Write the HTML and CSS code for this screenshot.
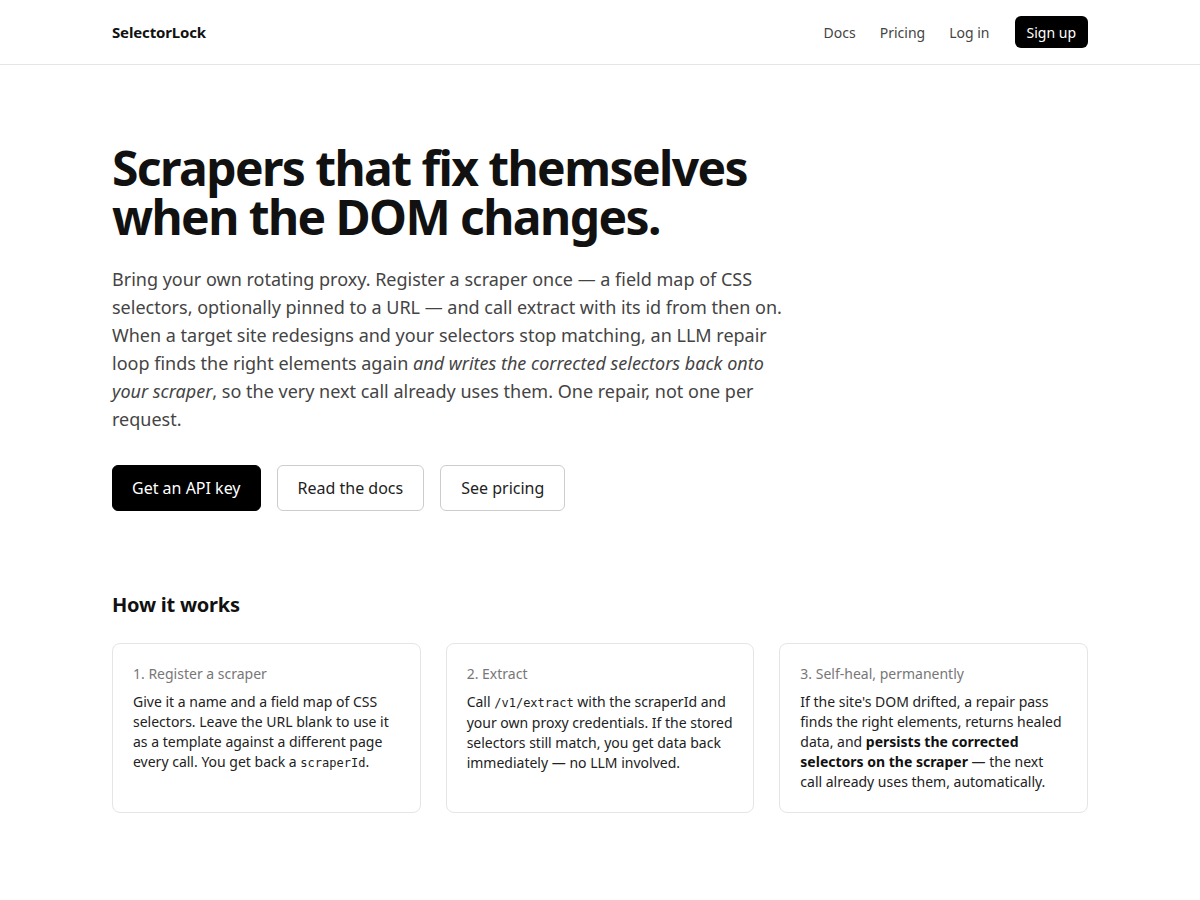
FILE: index.html
```html
<!DOCTYPE html>
<html lang="en">
<head>
<meta charset="utf-8">
<title>SelectorLock</title>
<link rel="stylesheet" href="styles.css">
</head>
<body>
<header class="topbar">
  <div class="wrap nav">
    <a class="logo" href="#">SelectorLock</a>
    <nav class="links">
      <a href="#">Docs</a>
      <a href="#">Pricing</a>
      <a href="#">Log in</a>
      <a class="signup" href="#">Sign up</a>
    </nav>
  </div>
</header>
<main class="wrap">
  <section class="hero">
    <h1>Scrapers that fix themselves<br>when the DOM changes.</h1>
    <p class="lede">Bring your own rotating proxy. Register a scraper once — a field map of CSS selectors, optionally pinned to a URL — and call extract with its id from then on. When a target site redesigns and your selectors stop matching, an LLM repair loop finds the right elements again <em>and writes the corrected selectors back onto your scraper</em>, so the very next call already uses them. One repair, not one per request.</p>
    <div class="actions">
      <a class="btn primary" href="#">Get an API key</a>
      <a class="btn" href="#">Read the docs</a>
      <a class="btn" href="#">See pricing</a>
    </div>
  </section>
  <section class="how">
    <h2>How it works</h2>
    <div class="cards">
      <div class="card">
        <div class="card-title">1. Register a scraper</div>
        <p>Give it a name and a field map of CSS selectors. Leave the URL blank to use it as a template against a different page every call. You get back a <code>scraperId</code>.</p>
      </div>
      <div class="card">
        <div class="card-title">2. Extract</div>
        <p>Call <code>/v1/extract</code> with the scraperId and your own proxy credentials. If the stored selectors still match, you get data back immediately — no LLM involved.</p>
      </div>
      <div class="card">
        <div class="card-title">3. Self-heal, permanently</div>
        <p>If the site's DOM drifted, a repair pass finds the right elements, returns healed data, and <strong>persists the corrected selectors on the scraper</strong> — the next call already uses them, automatically.</p>
      </div>
    </div>
  </section>
  <section class="next">
    <h2>One call, all fields</h2>
  </section>
</main>
</body>
</html>
```
FILE: styles.css
```css
* { box-sizing: border-box; }
html, body { margin: 0; padding: 0; }
body {
  font-family: "Noto Sans", "Open Sans", sans-serif;
  color: #111;
  background: #fff;
}
a { color: inherit; text-decoration: none; }
.wrap { max-width: 976px; margin: 0 auto; }
.topbar { border-bottom: 1px solid #e5e5e5; }
.nav {
  height: 64px;
  display: flex;
  align-items: center;
  justify-content: space-between;
}
.logo { font-weight: 700; font-size: 15px; color: #111; letter-spacing: -0.01em; }
.links { display: flex; align-items: center; gap: 24px; font-size: 14px; color: #444; }
.links a.signup {
  background: #000;
  color: #fff;
  border-radius: 6px;
  padding: 0 12px;
  height: 32px;
  display: flex;
  align-items: center;
  margin-left: 1px;
}
.hero { padding-top: 78px; }
h1 {
  margin: 0;
  font-size: 48px;
  line-height: 49px;
  font-weight: 700;
  letter-spacing: -0.033em;
  color: #111;
}
.lede {
  margin: 24px 0 0;
  max-width: 680px;
  font-size: 18px;
  line-height: 28px;
  color: #444;
}
.actions { display: flex; gap: 16px; margin-top: 32px; }
.btn {
  height: 46px;
  display: flex;
  align-items: center;
  padding: 0 20px;
  border: 1px solid #ccc;
  border-radius: 6px;
  font-size: 16px;
  color: #222;
}
.btn.primary { background: #000; border-color: #000; color: #fff; padding: 0 19px; }
.how { margin-top: 80px; }
h2 { margin: 0; font-size: 20px; line-height: 28px; font-weight: 700; color: #111; letter-spacing: -0.012em; }
.cards {
  margin-top: 24px;
  display: grid;
  grid-template-columns: repeat(3, 1fr);
  gap: 25px;
}
.card {
  border: 1px solid #e5e5e5;
  border-radius: 8px;
  padding: 20px 20px 20px;
  min-height: 170px;
}
.card-title { font-size: 14px; line-height: 20px; color: #777; }
.card p { margin: 8px 0 0; font-size: 14px; line-height: 20px; color: #222; }
code { font-family: "DejaVu Sans Mono", "Liberation Mono", monospace; font-size: 12px; }
.card strong { font-weight: 700; color: #111; }
.next { margin-top: 82px; padding-bottom: 60px; }
```
